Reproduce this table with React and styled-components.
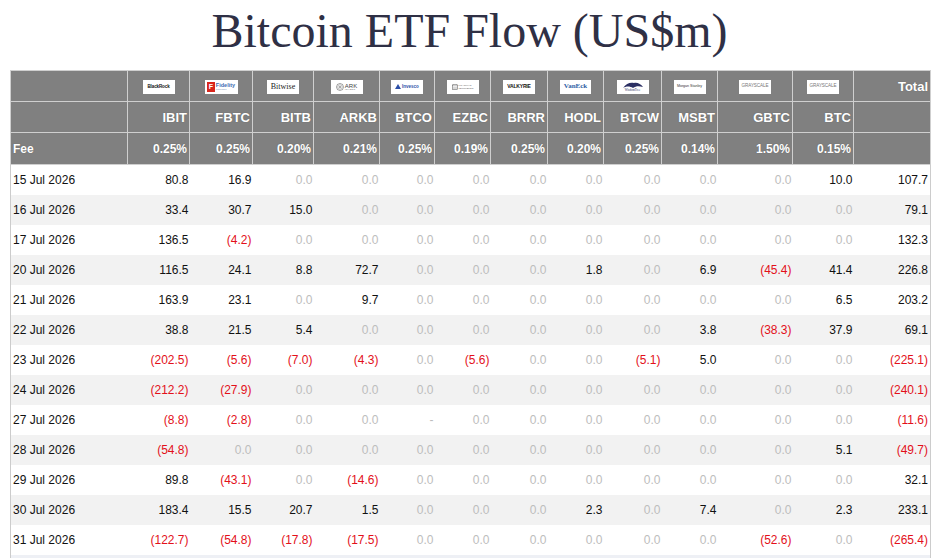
import React from "react";
import styled, { createGlobalStyle } from "styled-components";

const Global = createGlobalStyle`
  html, body { margin: 0; padding: 0; background: #fff; overflow: hidden; }
  body { font-family: "Liberation Sans", Arial, sans-serif; }
`;

const Page = styled.div`
  width: 939px;
  display: flex;
  flex-direction: column;
  align-items: stretch;
`;

const Title = styled.h1`
  margin: 0 0 8px 0;
  height: 62px;
  line-height: 62px;
  text-align: center;
  font-family: "Liberation Serif", "Times New Roman", serif;
  font-weight: normal;
  font-size: 48px;
  color: #2f3045;
`;

const Table = styled.table`
  margin-left: 10px;
  width: 920px;
  table-layout: fixed;
  border-collapse: collapse;
  font-family: "Liberation Sans", Arial, sans-serif;
`;

const HeadRow = styled.tr`
  height: ${(p) => p.$h}px;
  background: #808080;
`;

const HeadCell = styled.th`
  border: 1px solid #cfcfcf;
  padding: 0 2px;
  color: #fff;
  font-weight: bold;
  font-size: ${(p) => (p.$big ? 13 : 12)}px;
  text-align: ${(p) => (p.$left ? "left" : "right")};
  vertical-align: middle;
  text-shadow: 0 0 1px rgba(60, 60, 60, 0.5);
`;

const LogoCell = styled.th`
  border: 1px solid #cfcfcf;
  padding: 0;
  text-align: center;
  vertical-align: middle;
`;

const LogoBox = styled.div`
  display: inline-flex;
  align-items: center;
  justify-content: center;
  gap: 1px;
  width: ${(p) => p.$w || 32}px;
  height: 14px;
  background: #fff;
  vertical-align: middle;
  overflow: hidden;
`;

const LogoText = styled.span`
  font-family: ${(p) => (p.$serif ? '"Liberation Serif", serif' : '"Liberation Sans", Arial, sans-serif')};
  font-size: ${(p) => p.$size}px;
  font-weight: ${(p) => (p.$bold ? "bold" : "normal")};
  color: ${(p) => p.$color || "#111"};
  letter-spacing: ${(p) => p.$ls || 0}px;
  line-height: 1;
  white-space: nowrap;
`;

const LogoStack = styled.span`
  display: flex;
  flex-direction: column;
  align-items: ${(p) => (p.$center ? "center" : "flex-start")};
  line-height: 1;
`;

const FidelityMark = styled.span`
  display: inline-flex;
  align-items: center;
  justify-content: center;
  width: 8px;
  height: 10px;
  background: #d9261c;
  color: #fff;
  font-size: 7px;
  font-weight: bold;
  font-family: "Liberation Sans", Arial, sans-serif;
`;

const BodyRow = styled.tr`
  height: 30px;
  background: ${(p) => (p.$tint === "alt" ? "#f2f2f2" : p.$tint === "blue" ? "#eef0f5" : "#fff")};
`;

const DateCell = styled.td`
  border-left: 1px solid #cccccc;
  padding: 0 0 0 2px;
  font-size: 12px;
  color: #111;
  white-space: nowrap;
  vertical-align: middle;
`;

const toneColor = { pos: "#111", neg: "#e3101a", zero: "#bdbdbd" };

const NumCell = styled.td`
  padding: 0 ${(p) => (p.$last ? 2 : 1)}px 0 0;
  text-align: right;
  font-size: 12px;
  color: ${(p) => toneColor[p.$tone]};
  border-right: ${(p) => (p.$last ? "1px solid #cccccc" : "none")};
  vertical-align: middle;
  white-space: nowrap;
`;

const widths = [117, 62, 63, 61, 66, 55, 56, 57, 56, 58, 56, 75, 61, 77];

const tickers = ["IBIT", "FBTC", "BITB", "ARKB", "BTCO", "EZBC", "BRRR", "HODL", "BTCW", "MSBT", "GBTC", "BTC"];
const fees = ["0.25%", "0.25%", "0.20%", "0.21%", "0.25%", "0.19%", "0.25%", "0.20%", "0.25%", "0.14%", "1.50%", "0.15%"];

const ArkIcon = () => (
  <svg width="8" height="8" viewBox="0 0 10 10">
    <circle cx="5" cy="5" r="4.3" fill="none" stroke="#555" strokeWidth="0.7" />
    <path d="M5 0.8 L5 9.2 M1 5 L9 5 M2 2 L8 8 M8 2 L2 8" stroke="#777" strokeWidth="0.5" />
  </svg>
);

const InvescoIcon = () => (
  <svg width="6" height="5" viewBox="0 0 6 5">
    <path d="M0 5 L3 0 L6 5 Z" fill="#2c4fa8" />
  </svg>
);

const FranklinIcon = () => (
  <svg width="6" height="6" viewBox="0 0 6 6">
    <rect x="0.5" y="1" width="5" height="4.5" fill="none" stroke="#666" strokeWidth="0.6" />
    <path d="M0.5 1 L3 0 L5.5 1 M2 2.5 L2 5 M4 2.5 L4 5" stroke="#666" strokeWidth="0.5" fill="none" />
  </svg>
);

const WisdomIcon = () => (
  <svg width="22" height="7" viewBox="0 0 22 7">
    <path d="M1 6 C4 1, 9 0, 12 1 C15 0, 19 2, 21 5 C17 4, 14 4, 11 6 C8 4, 4 4, 1 6 Z" fill="#2b2f63" />
  </svg>
);

const logos = [
  <LogoBox key="br" $w={32}>
    <LogoText $size={4.5} $bold $ls={-0.1}>BlackRock</LogoText>
  </LogoBox>,
  <LogoBox key="fi" $w={33}>
    <FidelityMark>F</FidelityMark>
    <LogoStack>
      <LogoText $size={5.5} $bold $color="#3f6eb3">Fidelity</LogoText>
      <LogoText $size={1.5} $color="#7a8fb5">INVESTMENTS</LogoText>
    </LogoStack>
  </LogoBox>,
  <LogoBox key="bw" $w={32}>
    <LogoText $size={8} $serif $color="#222">Bitwise</LogoText>
  </LogoBox>,
  <LogoBox key="ark" $w={32}>
    <ArkIcon />
    <LogoStack>
      <LogoText $size={6} $color="#444">ARK</LogoText>
      <LogoText $size={2.5} $color="#666" $ls={0.3}>INVEST</LogoText>
    </LogoStack>
  </LogoBox>,
  <LogoBox key="iv" $w={32}>
    <InvescoIcon />
    <LogoText $size={4.5} $bold $color="#2c4fa8">Invesco</LogoText>
  </LogoBox>,
  <LogoBox key="ft" $w={32}>
    <FranklinIcon />
    <LogoStack>
      <LogoText $size={2.3} $color="#555" $ls={0.2}>FRANKLIN</LogoText>
      <LogoText $size={2.3} $color="#555" $ls={0.1}>TEMPLETON</LogoText>
    </LogoStack>
  </LogoBox>,
  <LogoBox key="vk" $w={32}>
    <LogoText $size={5} $bold $color="#111" $ls={-0.2}>VALKYRIE</LogoText>
  </LogoBox>,
  <LogoBox key="ve" $w={31}>
    <LogoText $size={7} $bold $serif $color="#2f5fa5">VanEck</LogoText>
  </LogoBox>,
  <LogoBox key="wt" $w={32}>
    <LogoStack $center>
      <WisdomIcon />
      <LogoText $size={3} $serif $color="#2b2f63">WisdomTree</LogoText>
    </LogoStack>
  </LogoBox>,
  <LogoBox key="ms" $w={32}>
    <LogoText $size={3.6} $color="#333">Morgan Stanley</LogoText>
  </LogoBox>,
  <LogoBox key="gs1" $w={32}>
    <LogoText $size={4.6} $color="#777" $ls={-0.1}>GRAYSCALE</LogoText>
  </LogoBox>,
  <LogoBox key="gs2" $w={32}>
    <LogoText $size={4.6} $color="#777" $ls={-0.1}>GRAYSCALE</LogoText>
  </LogoBox>,
];

const rows = [
  ["15 Jul 2026", ["80.8", "16.9", "0.0", "0.0", "0.0", "0.0", "0.0", "0.0", "0.0", "0.0", "0.0", "10.0", "107.7"]],
  ["16 Jul 2026", ["33.4", "30.7", "15.0", "0.0", "0.0", "0.0", "0.0", "0.0", "0.0", "0.0", "0.0", "0.0", "79.1"]],
  ["17 Jul 2026", ["136.5", "(4.2)", "0.0", "0.0", "0.0", "0.0", "0.0", "0.0", "0.0", "0.0", "0.0", "0.0", "132.3"]],
  ["20 Jul 2026", ["116.5", "24.1", "8.8", "72.7", "0.0", "0.0", "0.0", "1.8", "0.0", "6.9", "(45.4)", "41.4", "226.8"]],
  ["21 Jul 2026", ["163.9", "23.1", "0.0", "9.7", "0.0", "0.0", "0.0", "0.0", "0.0", "0.0", "0.0", "6.5", "203.2"]],
  ["22 Jul 2026", ["38.8", "21.5", "5.4", "0.0", "0.0", "0.0", "0.0", "0.0", "0.0", "3.8", "(38.3)", "37.9", "69.1"]],
  ["23 Jul 2026", ["(202.5)", "(5.6)", "(7.0)", "(4.3)", "0.0", "(5.6)", "0.0", "0.0", "(5.1)", "5.0", "0.0", "0.0", "(225.1)"]],
  ["24 Jul 2026", ["(212.2)", "(27.9)", "0.0", "0.0", "0.0", "0.0", "0.0", "0.0", "0.0", "0.0", "0.0", "0.0", "(240.1)"]],
  ["27 Jul 2026", ["(8.8)", "(2.8)", "0.0", "0.0", "-", "0.0", "0.0", "0.0", "0.0", "0.0", "0.0", "0.0", "(11.6)"]],
  ["28 Jul 2026", ["(54.8)", "0.0", "0.0", "0.0", "0.0", "0.0", "0.0", "0.0", "0.0", "0.0", "0.0", "5.1", "(49.7)"]],
  ["29 Jul 2026", ["89.8", "(43.1)", "0.0", "(14.6)", "0.0", "0.0", "0.0", "0.0", "0.0", "0.0", "0.0", "0.0", "32.1"]],
  ["30 Jul 2026", ["183.4", "15.5", "20.7", "1.5", "0.0", "0.0", "0.0", "2.3", "0.0", "7.4", "0.0", "2.3", "233.1"]],
  ["31 Jul 2026", ["(122.7)", "(54.8)", "(17.8)", "(17.5)", "0.0", "0.0", "0.0", "0.0", "0.0", "0.0", "(52.6)", "0.0", "(265.4)"]],
];

const toneOf = (v) => {
  if (v.startsWith("(")) return "neg";
  if (v === "0.0" || v === "-") return "zero";
  return "pos";
};

export default function App() {
  return (
    <Page>
      <Global />
      <Title>Bitcoin ETF Flow (US$m)</Title>
      <Table>
        <colgroup>
          {widths.map((w, i) => (
            <col key={i} style={{ width: w }} />
          ))}
        </colgroup>
        <thead>
          <HeadRow $h={31}>
            <HeadCell />
            {logos.map((l, i) => (
              <LogoCell key={i}>{l}</LogoCell>
            ))}
            <HeadCell $big>Total</HeadCell>
          </HeadRow>
          <HeadRow $h={31}>
            <HeadCell />
            {tickers.map((t) => (
              <HeadCell key={t} $big>{t}</HeadCell>
            ))}
            <HeadCell />
          </HeadRow>
          <HeadRow $h={32}>
            <HeadCell $left>Fee</HeadCell>
            {fees.map((f, i) => (
              <HeadCell key={i}>{f}</HeadCell>
            ))}
            <HeadCell />
          </HeadRow>
        </thead>
        <tbody>
          {rows.map(([date, vals], r) => (
            <BodyRow key={date} $tint={r % 2 === 1 ? "alt" : "plain"}>
              <DateCell>{date}</DateCell>
              {vals.map((v, i) => (
                <NumCell key={i} $tone={toneOf(v)} $last={i === vals.length - 1}>
                  {v}
                </NumCell>
              ))}
            </BodyRow>
          ))}
          <BodyRow $tint="blue">
            <DateCell />
            {widths.slice(1).map((_, i) => (
              <NumCell key={i} $tone="pos" $last={i === widths.length - 2} />
            ))}
          </BodyRow>
        </tbody>
      </Table>
    </Page>
  );
}
